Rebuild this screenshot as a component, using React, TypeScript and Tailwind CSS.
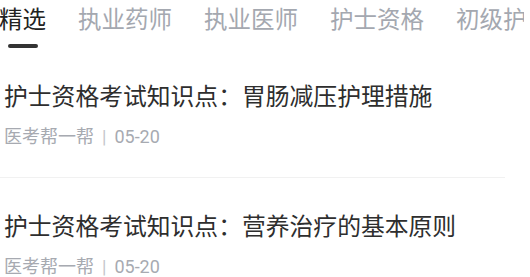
import React from 'react';

const tabs = ['精选', '执业药师', '执业医师', '护士资格', '初级护师'];

const articles = [
  { title: '护士资格考试知识点：胃肠减压护理措施', source: '医考帮一帮', date: '05-20' },
  { title: '护士资格考试知识点：营养治疗的基本原则', source: '医考帮一帮', date: '05-20' },
];

export default function App() {
  return (
    <div
      className="w-[530px] h-[277px] overflow-hidden bg-white"
      style={{ fontFamily: 'Roboto, "Noto Sans CJK SC", sans-serif' }}
    >
      {/* Tabs */}
      <div className="w-[525px] h-[48px] flex gap-8 ml-[-1px] pt-1 whitespace-nowrap overflow-hidden">
        {tabs.map((tab, i) => (
          <div key={tab} className="flex flex-col items-center shrink-0">
            <span
              className={
                'text-[23.5px] leading-[32px] ' +
                (i === 0 ? 'text-[#222222]' : 'text-[#a4a8b0]')
              }
            >
              {tab}
            </span>
            {i === 0 && <span className="mt-2 w-[30px] h-1 rounded-full bg-[#333333]" />}
          </div>
        ))}
      </div>

      {/* Article list */}
      <div className="w-[505px]">
        {articles.map((a) => (
          <div key={a.title} className="pt-[33px] pb-[28px] pl-1 border-b border-[#f1f1f1]">
            <div className="text-[23.8px] leading-[32px] text-[#2e2e2e] whitespace-nowrap">{a.title}</div>
            <div className="mt-3 text-[18px] leading-[24px] text-[#a7aab1] flex items-center">
              <span>{a.source}</span>
              <span className="mx-2 text-[#c4c6cb]">|</span>
              <span>{a.date}</span>
            </div>
          </div>
        ))}
      </div>
    </div>
  );
}
